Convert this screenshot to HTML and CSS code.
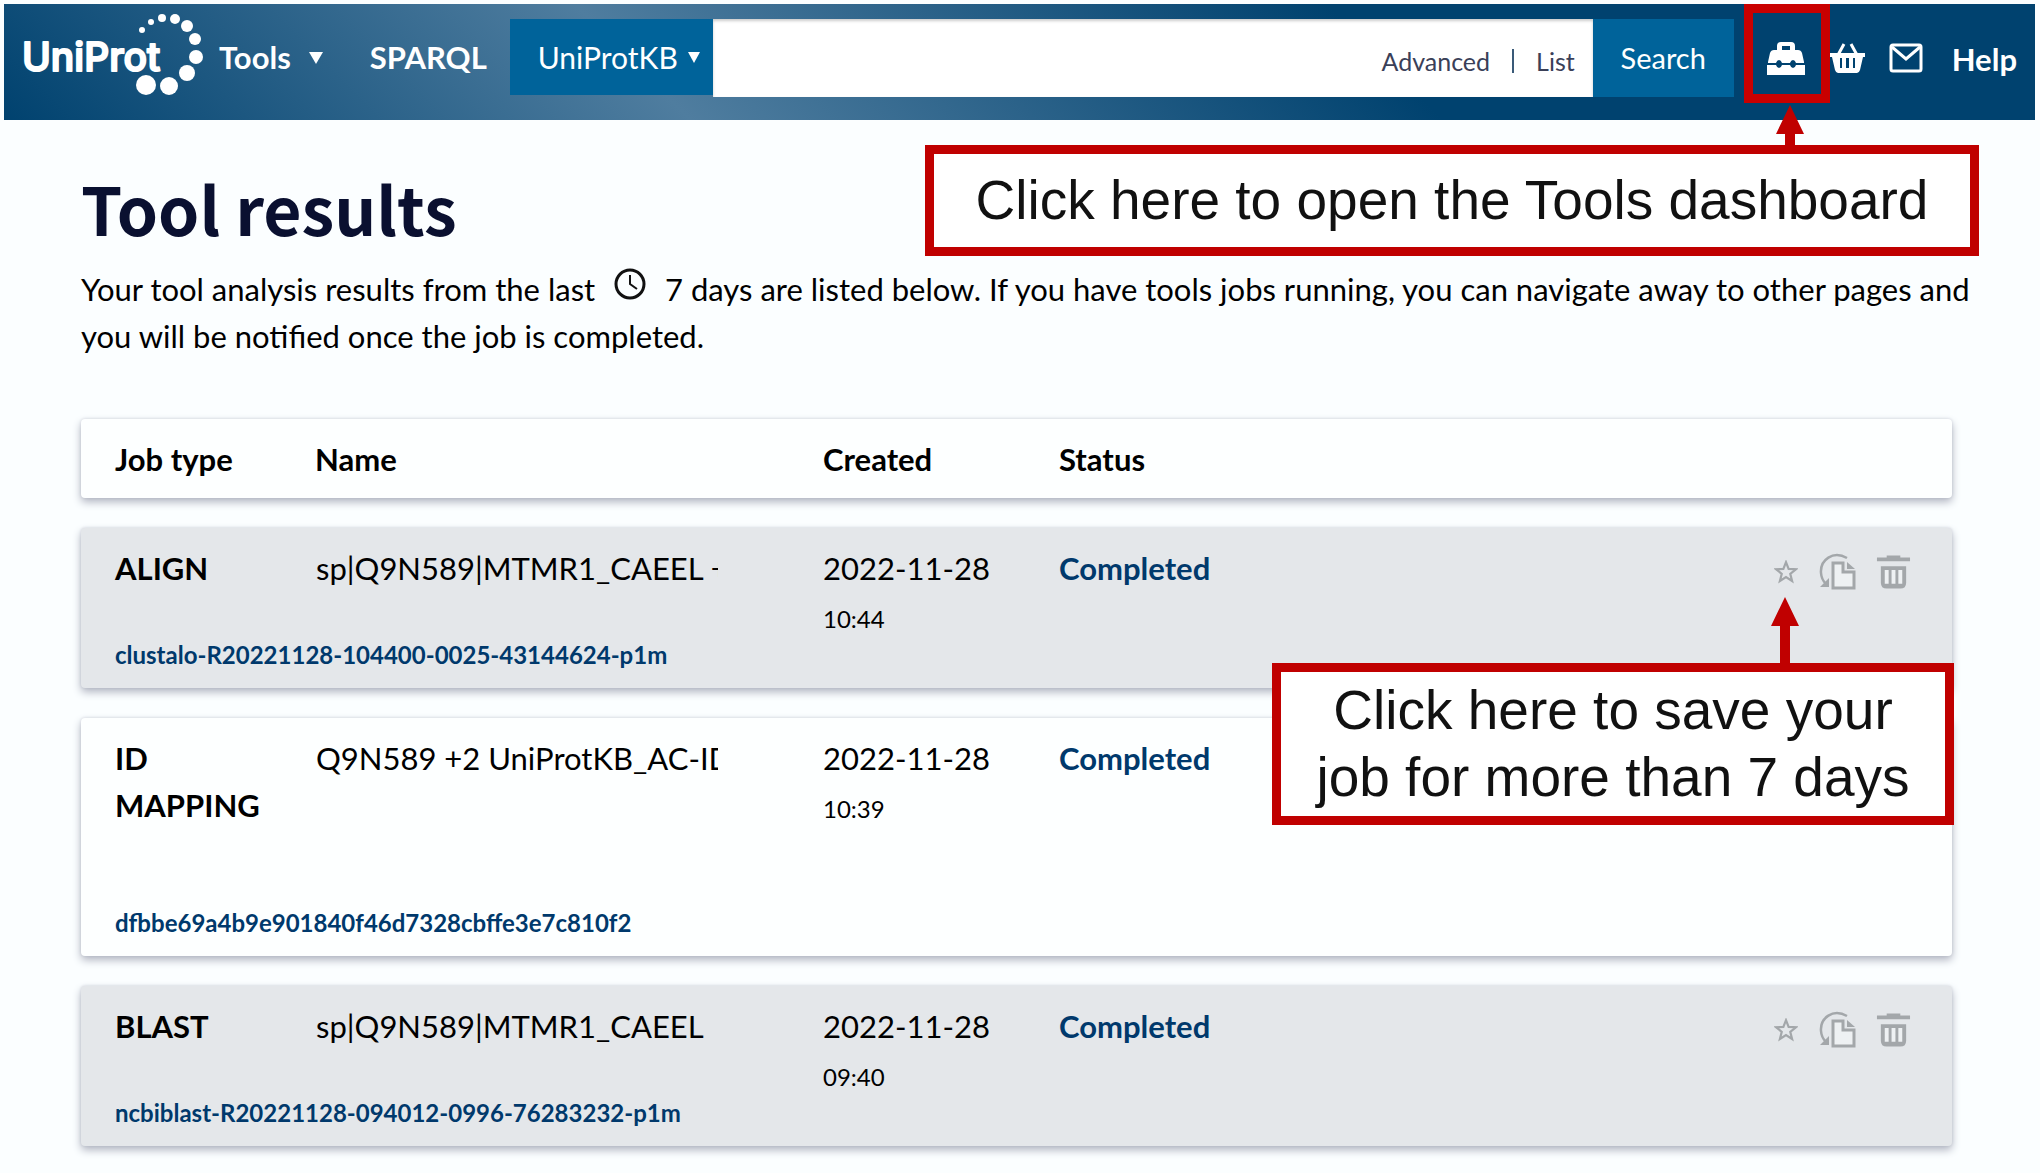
FILE: index.html
```html
<!DOCTYPE html>
<html lang="en">
<head>
<meta charset="utf-8">
<title>Tool results | UniProt</title>
<link rel="stylesheet" href="styles.css">
</head>
<body>
<svg class="sprite" aria-hidden="true">
  <symbol id="star" viewBox="0 0 22 22"><path d="M11 2l2.4 6.1 6.6.4-5.1 4.2 1.7 6.5L11 15.6l-5.6 3.6 1.7-6.5L2 8.500l6.600-.4z" fill="none" stroke="currentColor" stroke-width="2"/></symbol>
  <symbol id="resubmit" viewBox="0 0 38 38"><path d="M29 5C15-3 2 7 3 20c.3 5 2 8 5 11" fill="none" stroke="currentColor" stroke-width="2.500"/><path d="M2 34h9V25z" fill="currentColor"/><path d="M15 10h10v9h11v16H15z" fill="#eef1f3" stroke="currentColor" stroke-width="3"/><path d="M29 9l8 7h-8z" fill="currentColor"/></symbol>
  <symbol id="bin" viewBox="0 0 36 36"><path d="M1 3h10V1h14v2h10v4H1z" fill="currentColor"/><path d="M5 12h26v17q0 6-6 6H11q-6 0-6-6z" fill="currentColor"/><path d="M9 16h4v14H9zM16 16h4v14h-4zM23 16h4v14h-4z" fill="#eef1f3"/></symbol>
</svg>

<header class="header">
  <a class="logo" href="#" aria-label="UniProt home">
    <svg viewBox="0 0 186 84" width="186" height="84">
      <text class="logo-text" x="2" y="57">UniProt</text>
      <g fill="#fff">
        <circle cx="122" cy="16" r="3"/><circle cx="131" cy="8" r="3"/><circle cx="142" cy="4" r="4"/><circle cx="155" cy="5" r="5"/><circle cx="167" cy="12" r="6"/><circle cx="175" cy="25" r="6"/><circle cx="176" cy="43" r="7"/><circle cx="167" cy="59" r="8"/><circle cx="149" cy="72" r="9"/><circle cx="126" cy="71" r="10"/>
      </g>
    </svg>
  </a>
  <nav class="nav">
    <button class="nav-item" type="button">Tools <svg class="caret" width="16" height="12" viewBox="0 0 16 12"><path d="M1 0h14L8 12z" fill="#fff"/></svg></button>
    <a class="nav-item" href="#">SPARQL</a>
  </nav>
  <form class="search">
    <div class="namespace">
      <select aria-label="Namespace"><option>UniProtKB</option></select>
      <svg class="caret" width="12" height="11" viewBox="0 0 12 11"><path d="M0 0h12L6 11z" fill="#fff"/></svg>
    </div>
    <div class="field">
      <input type="text" aria-label="Search text">
      <a href="#">Advanced</a><span class="divider"></span><a href="#">List</a>
    </div>
    <button class="submit" type="submit">Search</button>
  </form>
  <div class="actions">
    <a class="toolbox" href="#" aria-label="Tools dashboard">
      <svg width="38" height="34" viewBox="0 0 38 34"><path fill="#fff" fill-rule="evenodd" d="M10 8V4q0-4 4-4h10q4 0 4 4v4h3q3 0 4 3l2 9v1H29q-1-3-3-3t-3 3h-8q-1-3-3-3t-3 3H1v-1l2-9q1-3 4-3zM15 8h8V4h-8z"/><path fill="#fff" d="M0 23h9q1 3 3 3t3-3h8q1 3 3 3t3-3h9v10H0z"/></svg>
    </a>
    <a class="basket" href="#" aria-label="Basket">
      <svg width="35" height="30" viewBox="0 0 35 30"><path d="M8 12l6-11M27 12L21 1" stroke="#fff" stroke-width="3" fill="none"/><path fill="#fff" fill-rule="evenodd" d="M0 10h35v4h-2l-3 13q-1 3-3 3H8q-2 0-3-3L2 14H0zM10 15v10h2V15zM16 15v10h3V15zM23 15v10h2V15z"/></svg>
    </a>
    <a class="mail" href="#" aria-label="Contact">
      <svg width="34" height="30" viewBox="0 0 34 30"><rect x="2" y="2" width="30" height="26" rx="2" fill="none" stroke="#fff" stroke-width="3"/><path d="M3 4l14 12L31 4" fill="none" stroke="#fff" stroke-width="3"/></svg>
    </a>
    <a class="nav-item" href="#">Help</a>
    <div class="highlight"></div>
    <div class="callout callout-tools">
      <svg class="arrow" width="28" height="41" viewBox="0 0 28 41"><path d="M14 0l14 29H19v12H9V29H0z" fill="#c00000"/></svg>
      Click here to open the Tools dashboard
    </div>
  </div>
</header>

<main class="main">
  <h1>Tool results</h1>
  <p class="intro">Your tool analysis results from the last <svg class="clock" width="34" height="34" viewBox="0 0 34 34"><circle cx="17" cy="17" r="14" fill="none" stroke="#111" stroke-width="3"/><path d="M17 8v9l7 5" fill="none" stroke="#111" stroke-width="2"/></svg> 7 days are listed below. If you have tools jobs running, you can navigate away to other pages and you will be notified once the job is completed.</p>

  <table class="jobs">
    <thead>
      <tr class="card"><th>Job type</th><th>Name</th><th>Created</th><th>Status</th></tr>
    </thead>
    <tbody>
      <tr class="card job seen">
        <th scope="row">ALIGN</th>
        <td><span class="name">sp|Q9N589|MTMR1_CAEEL +2</span></td>
        <td>2022-11-28<span class="time">10:44</span></td>
        <td><a class="status" href="#">Completed</a></td>
        <td class="tools">
          <button type="button" aria-label="Save job"><svg width="24" height="24"><use href="#star"/></svg></button>
          <button type="button" aria-label="Resubmit job"><svg width="38" height="38"><use href="#resubmit"/></svg></button>
          <button type="button" aria-label="Delete job"><svg width="35" height="36"><use href="#bin"/></svg></button>
          <div class="callout callout-save">
            <svg class="arrow" width="28" height="67" viewBox="0 0 28 67"><path d="M14 0l14 29H19v38H9V29H0z" fill="#c00000"/></svg>
            Click here to save your job for more than 7 days
          </div>
        </td>
        <td class="id"><a href="#">clustalo-R20221128-104400-0025-43144624-p1m</a></td>
      </tr>
      <tr class="card job mapping">
        <th scope="row">ID MAPPING</th>
        <td><span class="name">Q9N589 +2 UniProtKB_AC-ID</span></td>
        <td>2022-11-28<span class="time">10:39</span></td>
        <td><a class="status" href="#">Completed</a></td>
        <td class="id"><a href="#">dfbbe69a4b9e901840f46d7328cbffe3e7c810f2</a></td>
      </tr>
      <tr class="card job seen">
        <th scope="row">BLAST</th>
        <td><span class="name">sp|Q9N589|MTMR1_CAEEL</span></td>
        <td>2022-11-28<span class="time">09:40</span></td>
        <td><a class="status" href="#">Completed</a></td>
        <td class="tools">
          <button type="button" aria-label="Save job"><svg width="24" height="24"><use href="#star"/></svg></button>
          <button type="button" aria-label="Resubmit job"><svg width="38" height="38"><use href="#resubmit"/></svg></button>
          <button type="button" aria-label="Delete job"><svg width="35" height="36"><use href="#bin"/></svg></button>
        </td>
        <td class="id"><a href="#">ncbiblast-R20221128-094012-0996-76283232-p1m</a></td>
      </tr>
    </tbody>
  </table>
</main>
</body>
</html>
```
FILE: styles.css
```css
* { box-sizing: border-box; }

body {
  margin: 0;
  padding: 4px 5px 4px 4px;
  background: #fbfeff;
  color: #000;
  font: 31px/47px Lato, "Liberation Sans", sans-serif;
}

a { color: inherit; text-decoration: none; }
button, input, select { font: inherit; color: inherit; border: 0; background: none; padding: 0; margin: 0; border-radius: 0; }
svg { display: block; flex: none; }
.sprite { position: absolute; width: 0; height: 0; }

/* Header */
.header {
  display: flex;
  align-items: flex-start;
  height: 116px;
  padding: 0 18px 0 16px;
  background: linear-gradient(45deg, #00426f 0%, #4f7d9f 32%, #00426f 67%);
  color: #fff;
}
.logo { padding-top: 10px; }
.logo-text { font: 500 39px Inter, sans-serif; fill: #fff; stroke: #fff; stroke-width: 2px; stroke-linejoin: round; }
.nav { display: flex; gap: 46px; padding: 30px 23px 0 13px; }
.nav-item { display: flex; align-items: center; gap: 17px; font-weight: 700; }

.search { display: flex; flex: 1; height: 78px; margin-top: 15px; }
.namespace { display: flex; align-items: center; gap: 6px; width: 203px; height: 76px; padding: 0 13px 0 28px; background: #00639a; }
.namespace select { flex: 1; min-width: 0; appearance: none; font-size: 30px; }
.field { display: flex; flex: 1; align-items: center; gap: 22px; min-width: 0; padding: 6px 18px 0 18px; background: #fff; color: #3a4058; font-size: 25px; box-shadow: inset 0 2px 3px #ccc; }
.field input { flex: 1; min-width: 0; outline: 0; }
.divider { width: 2px; height: 24px; background: #3a5a78; }
.submit { width: 141px; padding-bottom: 2px; background: #00639a; font-size: 29px; }

.actions { position: relative; display: flex; padding-left: 10px; }
.actions .nav-item { padding-top: 32px; padding-left: 29px; }
.toolbox { width: 86px; padding: 38px 0 0 23px; }
.basket { padding-top: 39px; }
.mail { padding: 39px 0 0 24px; }
.highlight { position: absolute; top: 0; left: 10px; width: 86px; height: 99px; border: 9px solid #c80000; pointer-events: none; }

/* Annotations */
.callout {
  position: absolute;
  z-index: 2;
  border: 9px solid #c00000;
  background: #fff;
  color: #111;
  font: 55px/67px "Liberation Sans", Arial, sans-serif;
  text-align: center;
}
.callout-tools { top: 141px; right: 38px; width: 1054px; padding: 13px 0; }
.callout-save { top: 118px; right: -43px; width: 682px; padding: 5px 16px; }
.arrow { position: absolute; bottom: calc(100% + 8px); }
.callout-tools .arrow { right: 166px; }
.callout-save .arrow { right: 146px; }

/* Content */
.main { padding: 47px 83px 24px 77px; }
h1 { margin: 0 0 19px; color: #0a1030; font: 700 66px/80px "Noto Sans CJK SC", "Noto Sans", sans-serif; }
.intro { margin: 0 -40px 59px 0; }
.clock { display: inline-block; margin: 0 10px; }

.jobs, .jobs thead, .jobs tbody { display: flex; flex-direction: column; gap: 30px; }
.card {
  display: grid;
  grid-template-columns: 200px 508px 236px 1fr auto;
  padding: 17px 34px 15px;
  border-radius: 4px;
  background: #fdffff;
  box-shadow: 0 4px 8px #b0b4c0, 0 0 3px #d5d9e0;
}
.jobs th, .jobs td { padding: 0; text-align: left; }
.jobs th { padding-right: 48px; font-weight: 700; }
.job { grid-template-rows: auto 36px; }
.seen { background: #e4e7ea; }
.mapping { grid-template-rows: 170px 36px; }
.name { display: block; width: 403px; padding-left: 1px; overflow: hidden; white-space: nowrap; }
.time { display: block; padding-top: 8px; font-size: 24px; line-height: 37px; }
.status { color: #00396c; font-weight: 700; }
.id { grid-column: 1 / -1; color: #00396c; font-size: 24px; line-height: 36px; font-weight: 700; }
.tools { position: relative; display: flex; align-items: center; gap: 20px; height: 54px; margin-right: 7px; color: #a3a7aa; }
```
